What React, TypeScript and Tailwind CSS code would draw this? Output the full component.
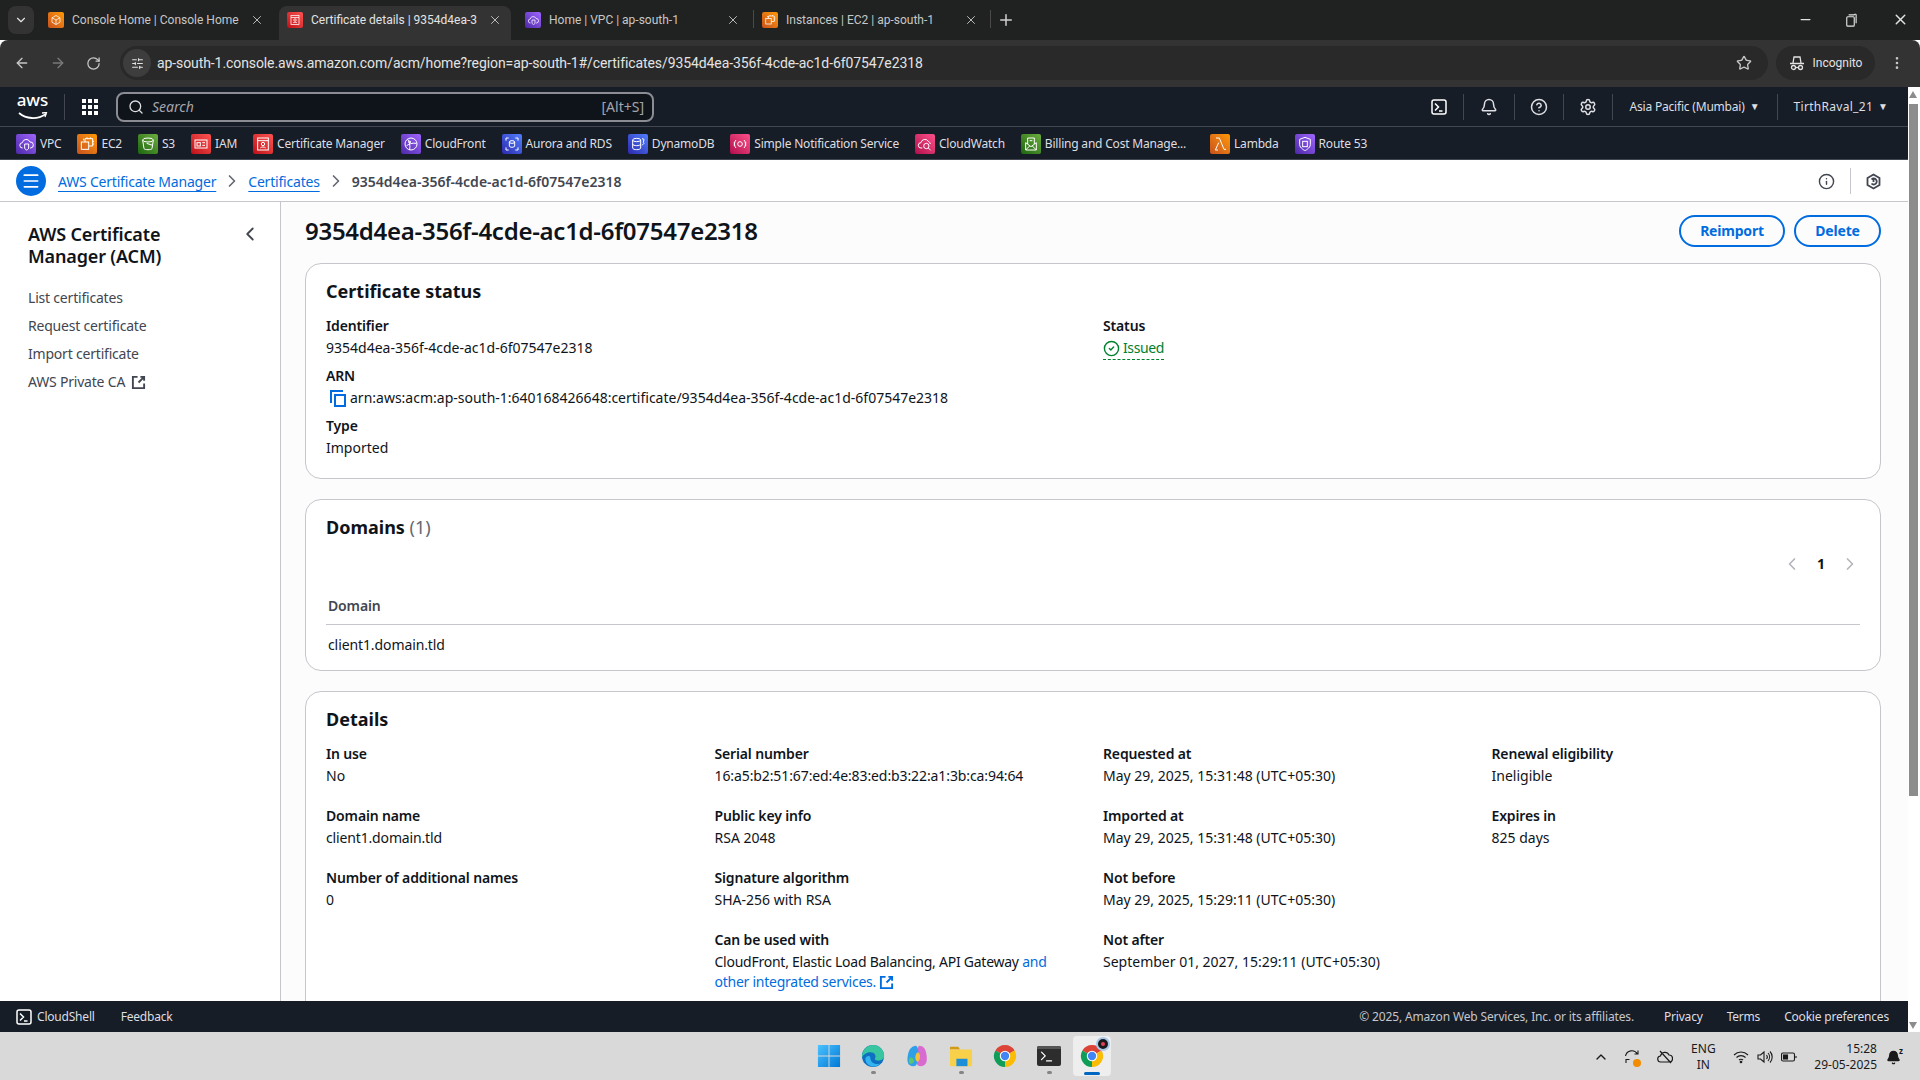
import React from "react";
import { X, ArrowLeft, ArrowRight, RotateCw, Star, EllipsisVertical, ChevronDown, Plus, Minus, Search, Bell, CircleHelp, Settings, ChevronRight, ChevronLeft, Info, Menu, CircleCheck, ChevronUp, SlidersHorizontal, Terminal } from "lucide-react";

const SANS = "font-['Noto_Sans',sans-serif]";
const UI = "font-['Roboto',sans-serif]";

const GRAD: Record<string, string> = {
  purple: "bg-linear-to-tr from-[#4d27a8] to-[#a166ff]",
  orange: "bg-linear-to-tr from-[#c8511b] to-[#ff9900]",
  green: "bg-linear-to-tr from-[#1b660f] to-[#6cae3e]",
  red: "bg-linear-to-tr from-[#bd0816] to-[#ff5252]",
  blue: "bg-linear-to-tr from-[#2e27ad] to-[#527fff]",
  pink: "bg-linear-to-tr from-[#b0084d] to-[#ff4f8b]",
};

const GLYPH: Record<string, React.ReactNode> = {
  vpc: <><path d="M7 18a4 4 0 0 1-.5-8 6 6 0 0 1 11.500-1 4.500 4.500 0 0 1 1 9h-1" /><path d="M10 12h6v6c0 2-3 3-3 3s-3-1-3-3z" /></>,
  ec2: <><rect x="3.500" y="9" width="11" height="11" /><path d="M9 9V4h11.500v11H15" /><path d="M7 6.500V4M12 2v2M17 2v2M22.500 8H20M22.500 12H20" /></>,
  s3: <><ellipse cx="12" cy="6" rx="8" ry="3" /><path d="M4 6l2 13c1 2 11 2 12 0l2-13" /><path d="M10 11l9 3" /></>,
  iam: <><rect x="3" y="6" width="18" height="12" /><rect x="6" y="10" width="5" height="5" /><path d="M14 10h4M14 14h4" /></>,
  acm: <><rect x="4" y="3" width="16" height="18" /><path d="M4 7h16" /><circle cx="12" cy="12" r="2.500" /><path d="M8 18c1-2 7-2 8 0" /></>,
  cf: <><circle cx="12" cy="12" r="9" /><path d="M7 5c3 4 4 9 3 16M5 15c3-3 9-5 15-4" /><circle cx="10" cy="9" r="1.500" /></>,
  rds: <><path d="M3 7V3h4M17 3h4v4M21 17v4h-4M7 21H3v-4" /><ellipse cx="12" cy="9" rx="4" ry="2" /><path d="M8 9v6c0 2.600 8 2.600 8 0V9" /></>,
  ddb: <><ellipse cx="10" cy="6" rx="6" ry="2.500" /><path d="M4 6v12c0 3.300 12 3.300 12 0V6M4 12c0 3.300 12 3.300 12 0" /><path d="M18 4l3 1-1 5 1 1-3 3" /></>,
  sns: <><circle cx="12" cy="12" r="3.500" /><path d="M6 6a9 9 0 0 0 0 12M18 6a9 9 0 0 1 0 12M3.500 9v6M20.500 9v6" /></>,
  cw: <><path d="M8 18H6a4 4 0 0 1 0-8 6 6 0 0 1 11-2 5 5 0 0 1 3 4" /><circle cx="14" cy="15" r="4" /><path d="M17 18l3.500 3.500" /></>,
  bill: <><path d="M4 10l8 6 8-6v11H4z" /><path d="M4 21l6-6M20 21l-6-6" /><path d="M7 12V3h10v9M10 7h4" /></>,
  lambda: <path d="M6 3h5l7 17h3M9 21h-4l5-11" />,
  r53: <><path d="M12 2l8 3v8c0 5-8 9-8 9s-8-4-8-9V5z" /><rect x="8.500" y="8" width="7" height="8" /></>,
  home: <><path d="M12 3l8 4.500v9L12 21l-8-4.500v-9zM4 7.500l8 4.500 8-4.500M12 12v9" /></>,
};

const Tile = ({ c, g, s = 20 }: { c: string; g: string; s?: number }) => (
  <span className={`flex shrink-0 items-center justify-center rounded-[2px] ${GRAD[c]}`} style={{ width: s, height: s }}>
    <svg width={s - 4} height={s - 4} viewBox="0 0 24 24" fill="none" stroke="#fff" strokeWidth="1.5">{GLYPH[g]}</svg>
  </span>
);

function Tab({ title, c, g, active, sep, w, pr }: { title: string; c: string; g: string; active?: boolean; sep?: boolean; w: string; pr: string }) {
  return (
    <div className={`relative flex h-[34px] items-center pb-[6px] pl-2 ${pr} ${w} ${UI} ${active ? "rounded-t-lg bg-[#333333] text-[#e3e3e3]" : "text-[#c7c7c7]"}`}>
      <Tile c={c} g={g} s={16} />
      <span className="ml-2 flex-1 overflow-hidden whitespace-nowrap text-[12px]">{title}</span>
      <X size={14} strokeWidth={1.5} className="ml-[11px]" color="#d0d0d0" />
      {sep && <span className="absolute right-0 top-1 h-[18px] w-px bg-[#4a4a4a]" />}
    </div>
  );
}

function ServiceItem({ label, c, g, cls = "" }: { label: string; c: string; g: string; cls?: string }) {
  return (
    <div className={`flex items-center gap-[4px] ${cls}`}>
      <Tile c={c} g={g} />
      <span className="whitespace-nowrap text-[12px] tracking-[-0.2px] text-[#dedee3]">{label}</span>
    </div>
  );
}

const Field = ({ label, children }: { label: string; children: React.ReactNode }) => (
  <div className="text-[14px] leading-[22px]">
    <div className="font-semibold tracking-[-0.15px] text-[#0f141a]">{label}</div>
    <div className="text-[#0f141a]">{children}</div>
  </div>
);

const Ext = ({ size = 16 }: { size?: number }) => (
  <svg width={size} height={size} viewBox="0 0 16 16" fill="none" stroke="currentColor" strokeWidth="2" className="inline-block align-[-3px]">
    <path d="M7 2H2v12h12V9" />
    <path d="M10 2h4v4M14 2L8 8" />
  </svg>
);

const Card = ({ children, cls = "" }: { children: React.ReactNode; cls?: string }) => (
  <section className={`rounded-2xl border border-[#c6c6cd] bg-white px-5 ${cls}`}>{children}</section>
);

const Divider = () => <span className="h-[26px] w-px bg-[#424650]" />;

const Shell = () => (
  <svg width="16" height="16" viewBox="0 0 16 16" fill="none" stroke="#fff" strokeWidth="1.500">
    <rect x="1" y="1" width="14" height="14" rx="2" />
    <path d="M4 4.500L7.500 8 4 11.500M8 12h3.500" />
  </svg>
);

const Chrome = () => (
  <svg width="24" height="24" viewBox="0 0 26 26">
    <path d="M13 13L2.600 7A12 12 0 0 1 23.400 7z" fill="#db4437" />
    <path d="M13 13L2.600 7A12 12 0 0 0 13 25z" fill="#0f9d58" />
    <path d="M13 13V25A12 12 0 0 0 23.400 7z" fill="#fbbc05" />
    <circle cx="13" cy="13" r="5.700" fill="#fff" />
    <circle cx="13" cy="13" r="4.500" fill="#4285f4" />
  </svg>
);

const TaskIcon = ({ children, dot }: { children: React.ReactNode; dot?: boolean }) => (
  <span className="relative flex h-[24px] w-[24px] items-center justify-center">
    {children}
    {dot && <span className="absolute bottom-[-6px] h-[3px] w-[5px] rounded-full bg-[#858585]" />}
  </span>
);

export default function App() {
  return (
    <div className={`flex h-[1080px] w-[1920px] flex-col overflow-hidden ${SANS}`}>
      {/* tab strip */}
      <div className="flex h-[40px] shrink-0 items-end bg-[#202221] pl-2">
        <div className="mb-[6px] mr-[6px] flex h-[28px] w-[26px] items-center justify-center rounded-lg bg-[#333333]">
          <ChevronDown size={14} color="#e3e3e3" />
        </div>
        <div className="flex">
          <Tab title="Console Home | Console Home" c="orange" g="home" w="w-[239px]" pr="pr-[15px]" />
          <Tab title="Certificate details | 9354d4ea-356f-4cde" c="red" g="acm" w="w-[232px]" pr="pr-[9px]" active />
          <div className="w-[6px]" />
          <Tab title="Home | VPC | ap-south-1" c="purple" g="vpc" w="w-[237px]" pr="pr-[14px]" sep />
          <Tab title="Instances | EC2 | ap-south-1" c="orange" g="ec2" w="w-[237px]" pr="pr-[13px]" sep />
        </div>
        <Plus size={18} color="#d0d0d0" className="mb-[11px] ml-[6px]" />
        <div className="mb-[12px] ml-auto flex items-center pr-[11px] text-[#e3e3e3]">
          <Minus size={15} />
          <svg width="15" height="15" viewBox="0 0 16 16" fill="none" stroke="currentColor" strokeWidth="1.200" className="ml-[30px]">
            <rect x="4" y="5" width="8" height="10" rx="1" />
            <path d="M6 3h6a1 1 0 0 1 2 1v8" />
          </svg>
          <X size={17} className="ml-[34px]" />
        </div>
      </div>
      {/* toolbar */}
      <div className="flex h-[47px] shrink-0 items-center rounded-t-lg bg-[#333333] pb-px pl-[14px] text-[#c7c7c7]">
        <ArrowLeft size={16} />
        <ArrowRight size={16} color="#7a7a7a" className="ml-5" />
        <RotateCw size={15} className="ml-5" />
        <div className="ml-[19px] flex h-[34px] w-[1648px] items-center rounded-full bg-[#292929] pl-[3px]">
          <span className="flex h-[28px] w-[28px] items-center justify-center rounded-full bg-[#3d3d3d]">
            <SlidersHorizontal size={13} color="#e3e3e3" />
          </span>
          <span className={`ml-[6px] text-[14px] tracking-[-0.09px] text-[#e3e3e3] ${UI}`}>ap-south-1.console.aws.amazon.com/acm/home?region=ap-south-1#/certificates/9354d4ea-356f-4cde-ac1d-6f07547e2318</span>
          <Star size={16} className="ml-auto mr-[16px]" />
        </div>
        <div className={`ml-2 flex h-[34px] w-[99px] items-center justify-center gap-[8px] rounded-full bg-[#292929] text-[12px] text-[#e3e3e3] ${UI}`}>
          <svg width="16" height="16" viewBox="0 0 16 16" fill="none" stroke="#e3e3e3" strokeWidth="1.300"><path d="M1 8.500h14M4 8l1-6h6l1 6" /><circle cx="4.500" cy="12.500" r="2" /><circle cx="11.500" cy="12.500" r="2" /><path d="M6.500 12.500h3" /></svg>
          Incognito
        </div>
        <EllipsisVertical size={16} className="ml-[14px]" />
      </div>
      {/* browser viewport */}
      <div className="flex min-h-0 flex-1">
        <div className="flex min-w-0 flex-1 flex-col">
          {/* aws nav */}
          <div className="flex h-[40px] shrink-0 items-center border-b border-[#424650] bg-[#161d26] text-[#dedee3]">
            <div className="relative ml-[17px] flex h-[32px] w-[31px] flex-col items-center">
              <span className="text-[17px] font-medium leading-[18px] text-white">aws</span>
              <svg width="31" height="9" viewBox="0 0 31 9" className="absolute bottom-[2px]"><path d="M2 1c7 6 18 7 27 1" stroke="#fff" strokeWidth="1.800" fill="none" /><path d="M25 1l4.500-.5L28 5" fill="none" stroke="#fff" strokeWidth="1.300" /></svg>
            </div>
            <span className="ml-[16px] h-[26px] w-px bg-[#424650]" />
            <svg width="18" height="18" viewBox="0 0 18 18" fill="#fff" className="ml-[16px]">
              <path d="M1 1h4v4H1zM7 1h4v4H7zM13 1h4v4h-4zM1 7h4v4H1zM7 7h4v4H7zM13 7h4v4h-4zM1 13h4v4H1zM7 13h4v4H7zM13 13h4v4h-4z" />
            </svg>
            <div className="ml-[17px] flex h-[30px] w-[538px] items-center rounded-[8px] border-2 border-[#8c8c94] bg-[#0f141a] pl-[10px] pr-2">
              <Search size={16} color="#dedee3" />
              <span className="ml-[8px] text-[14px] italic text-[#a4a4ad]">Search</span>
              <span className="ml-auto text-[14px] text-[#a4a4ad]">[Alt+S]</span>
            </div>
            <div className="ml-auto flex items-center">
              <span className="mr-[16px]"><Shell /></span>
              <Divider />
              <Bell size={18} className="mx-[16px]" />
              <Divider />
              <CircleHelp size={18} className="mx-[15px]" />
              <Divider />
              <Settings size={18} className="mx-[15px]" />
              <Divider />
              <span className="ml-[17px] text-[12px] tracking-[-0.2px]">Asia Pacific (Mumbai)</span>
              <span className="ml-[5px] mr-[17px] text-[10px]">▼</span>
              <Divider />
              <span className="ml-[16px] text-[12px] tracking-[0.3px]">TirthRaval_21</span>
              <span className="ml-[5px] mr-[20px] text-[10px]">▼</span>
            </div>
          </div>
          {/* services */}
          <div className="flex h-[33px] shrink-0 items-center gap-[16px] border-b border-[#424650] bg-[#161d26] pl-[16px] pt-px">
            <ServiceItem label="VPC" c="purple" g="vpc" />
            <ServiceItem label="EC2" c="orange" g="ec2" />
            <ServiceItem label="S3" c="green" g="s3" />
            <ServiceItem label="IAM" c="red" g="iam" />
            <ServiceItem label="Certificate Manager" c="red" g="acm" />
            <ServiceItem label="CloudFront" c="purple" g="cf" />
            <ServiceItem label="Aurora and RDS" c="blue" g="rds" />
            <ServiceItem label="DynamoDB" c="blue" g="ddb" />
            <ServiceItem label="Simple Notification Service" c="pink" g="sns" />
            <ServiceItem label="CloudWatch" c="pink" g="cw" />
            <ServiceItem label="Billing and Cost Manage..." c="green" g="bill" cls="mr-[8px]" />
            <ServiceItem label="Lambda" c="orange" g="lambda" />
            <ServiceItem label="Route 53" c="purple" g="r53" />
          </div>
          {/* breadcrumbs */}
          <div className="flex h-[42px] shrink-0 items-center border-b border-[#c6c6cd] bg-white pl-[16px] pt-px">
            <span className="flex h-[30px] w-[30px] items-center justify-center rounded-full bg-[#006ce0]">
              <Menu size={20} color="#fff" />
            </span>
            <span className="ml-3 text-[14px] tracking-[-0.2px] text-[#006ce0] underline underline-offset-4">AWS Certificate Manager</span>
            <ChevronRight size={20} color="#656871" className="mx-[6px]" />
            <span className="text-[14px] tracking-[-0.2px] text-[#006ce0] underline underline-offset-4">Certificates</span>
            <ChevronRight size={20} color="#656871" className="mx-[6px]" />
            <span className="text-[14px] font-semibold text-[#424650]">9354d4ea-356f-4cde-ac1d-6f07547e2318</span>
            <div className="ml-auto flex items-center pr-[26px] text-[#424650]">
              <Info size={17} className="mr-[15px]" />
              <span className="h-[26px] w-px bg-[#c6c6cd]" />
              <svg width="17" height="17" viewBox="0 0 17 17" fill="none" stroke="currentColor" strokeWidth="1.800" className="ml-[14px]">
                <path d="M8.500 1.500l6 3.500v7l-6 3.500-6-3.500V5z" />
                <path d="M6.500 6.500a3 3 0 1 1 0 4M8.500 6.500v2.500" />
              </svg>
            </div>
          </div>
          {/* body */}
          <div className="flex min-h-0 flex-1">
            <aside className="w-[281px] shrink-0 border-r border-[#c6c6cd] bg-white pl-[28px] pr-[24px] pt-[21px]">
              <div className="flex items-start justify-between">
                <h2 className="w-[170px] text-[18px] font-semibold leading-[22px] tracking-[-0.15px] text-[#0f141a]">AWS Certificate Manager (ACM)</h2>
                <ChevronLeft size={22} color="#424650" className="mr-[-5px] mt-[0px]" />
              </div>
              <nav className="mt-[20px] flex flex-col gap-[6px] text-[14px] leading-[22px] tracking-[-0.2px] text-[#424650]">
                <span>List certificates</span>
                <span>Request certificate</span>
                <span>Import certificate</span>
                <span>AWS Private CA <span className="ml-[2px]"><Ext size={15} /></span></span>
              </nav>
            </aside>
            <main className="min-w-0 flex-1 overflow-hidden bg-[#fcfcfc] pl-6 pr-[27px]">
              <div className="flex h-[61px] items-center justify-between pb-[4px]">
                <h1 className="text-[24px] font-semibold tracking-[-0.27px] text-[#0f141a]">9354d4ea-356f-4cde-ac1d-6f07547e2318</h1>
                <div className="flex gap-[9px]">
                  <button className="h-[32px] w-[106px] rounded-full border-2 border-[#006ce0] text-[14px] font-bold tracking-[-0.2px] text-[#006ce0]">Reimport</button>
                  <button className="h-[32px] w-[87px] rounded-full border-2 border-[#006ce0] text-[14px] font-bold tracking-[-0.2px] text-[#006ce0]">Delete</button>
                </div>
              </div>
              <Card cls="h-[216px] pt-[14px]">
                <h2 className="text-[18px] font-bold leading-[26px] text-[#0f141a]">Certificate status</h2>
                <div className="mt-[11px] grid grid-cols-[777px_1fr]">
                  <div className="flex flex-col gap-[6px]">
                    <Field label="Identifier">9354d4ea-356f-4cde-ac1d-6f07547e2318</Field>
                    <Field label="ARN">
                      <span className="flex items-center">
                        <svg width="18" height="18" viewBox="0 0 18 18" fill="none" stroke="#006ce0" strokeWidth="2" className="ml-[3px] mr-[3px]">
                          <path d="M2 14V2h12" />
                          <rect x="6" y="6" width="10" height="11" />
                        </svg>
                        arn:aws:acm:ap-south-1:640168426648:certificate/9354d4ea-356f-4cde-ac1d-6f07547e2318
                      </span>
                    </Field>
                    <Field label="Type">Imported</Field>
                  </div>
                  <Field label="Status">
                    <span className="inline-flex items-center gap-[3px] border-b border-dashed border-[#00802f] tracking-[-0.4px] text-[#00802f]">
                      <CircleCheck size={17} strokeWidth={2} />
                      Issued
                    </span>
                  </Field>
                </div>
              </Card>
              <Card cls="mt-5 h-[172px] pt-[14px]">
                <h2 className="text-[18px] font-bold leading-[26px] text-[#0f141a]">Domains <span className="font-normal text-[#656871]">(1)</span></h2>
                <div className="mt-[13px] flex items-center justify-end gap-[12px] text-[#b4b4bb]">
                  <ChevronLeft size={20} />
                  <span className="w-[14px] text-center text-[14px] font-bold text-[#0f141a]">1</span>
                  <ChevronRight size={20} />
                </div>
                <div className="mt-[21px] border-b border-[#c6c6cd] pb-[7px] pl-[2px] text-[14px] font-semibold leading-[22px] tracking-[-0.15px] text-[#424650]">Domain</div>
                <div className="pl-[2px] pt-[9px] text-[14px] leading-[22px] tracking-[-0.1px] text-[#0f141a]">client1.domain.tld</div>
              </Card>
              <Card cls="mt-5 h-[400px] pt-[14px]">
                <h2 className="text-[18px] font-bold leading-[26px] text-[#0f141a]">Details</h2>
                <div className="mt-[11px] grid grid-cols-4 gap-x-5">
                  <div className="flex flex-col gap-[18px]">
                    <Field label="In use">No</Field>
                    <Field label="Domain name"><span className="tracking-[-0.15px]">client1.domain.tld</span></Field>
                    <Field label="Number of additional names">0</Field>
                  </div>
                  <div className="flex flex-col gap-[18px]">
                    <Field label="Serial number"><span className="tracking-[-0.1px]">16:a5:b2:51:67:ed:4e:83:ed:b3:22:a1:3b:ca:94:64</span></Field>
                    <Field label="Public key info">RSA 2048</Field>
                    <Field label="Signature algorithm">SHA-256 with RSA</Field>
                    <Field label="Can be used with">
                      <span className="mt-[1px] block w-[350px] leading-[20px] tracking-[-0.25px]">CloudFront, Elastic Load Balancing, API Gateway <span className="text-[#006ce0]">and other integrated services. <Ext size={15} /></span></span>
                    </Field>
                  </div>
                  <div className="flex flex-col gap-[18px]">
                    <Field label="Requested at">May 29, 2025, 15:31:48 (UTC+05:30)</Field>
                    <Field label="Imported at">May 29, 2025, 15:31:48 (UTC+05:30)</Field>
                    <Field label="Not before">May 29, 2025, 15:29:11 (UTC+05:30)</Field>
                    <Field label="Not after">September 01, 2027, 15:29:11 (UTC+05:30)</Field>
                  </div>
                  <div className="flex flex-col gap-[18px]">
                    <Field label="Renewal eligibility">Ineligible</Field>
                    <Field label="Expires in">825 days</Field>
                  </div>
                </div>
              </Card>
            </main>
          </div>
          {/* footer */}
          <div className="flex h-[31px] shrink-0 items-center bg-[#161d26] pl-[16px] pr-[19px] text-[12px] tracking-[-0.2px] text-[#dedee3]">
            <Shell />
            <span className="ml-[5px]">CloudShell</span>
            <span className="ml-[26px]">Feedback</span>
            <span className="ml-auto tracking-[-0.15px] text-[#c6c6cd]">© 2025, Amazon Web Services, Inc. or its affiliates.</span>
            <span className="ml-[30px]">Privacy</span>
            <span className="ml-[24px]">Terms</span>
            <span className="ml-[24px]">Cookie preferences</span>
          </div>
        </div>
        {/* scrollbar */}
        <div className="flex w-[12px] shrink-0 flex-col items-start bg-white pl-[1px]">
          <span className="mt-[4px] h-0 w-0 border-x-[4px] border-b-[7px] border-x-transparent border-b-[#8c8c8c]" />
          <span className="mt-[6px] h-[692px] w-[9px] bg-[#8c8c8c]" />
          <span className="mb-[3px] mt-auto h-0 w-0 border-x-[4px] border-t-[7px] border-x-transparent border-t-[#8c8c8c]" />
        </div>
      </div>
      {/* taskbar */}
      <div className="flex h-[48px] shrink-0 items-center bg-[#d9d9d9] text-[#1a1a1a]">
        <div className="ml-[817px] flex items-center gap-[20px]">
          <TaskIcon>
            <svg width="24" height="24" viewBox="0 0 26 26">
              <defs><linearGradient id="w" x1="0" y1="0" x2="1" y2="1"><stop offset="0" stopColor="#4cc2ff" /><stop offset="1" stopColor="#0078d4" /></linearGradient></defs>
              <path d="M1 1h11.500v11.500H1zM13.500 1H25v11.500H13.500zM1 13.500h11.500V25H1zM13.500 13.500H25V25H13.500z" fill="url(#w)" />
            </svg>
          </TaskIcon>
          <TaskIcon dot>
            <svg width="24" height="24" viewBox="0 0 26 26">
              <circle cx="13" cy="13" r="12" fill="#0f6fc0" />
              <path d="M13 1a12 12 0 0 1 12 12c0 3-3 5-6 5-3 0-4-1-4-2 2-3 0-7-5-7C6 9 2 12 1 15 1 7 6 1 13 1z" fill="#38c6a0" />
              <path d="M10 14c0 6 5 9 11 7-3 3-7 4-10 3-4-1-7-5-6-9 1-2 4-3 5-1z" fill="#33b4f0" />
            </svg>
          </TaskIcon>
          <TaskIcon>
            <svg width="24" height="24" viewBox="0 0 26 26">
              <path d="M15 2c5 0 7 3 8 8s2 14-6 14c-4 0-5-3-3-7s1-7-2-8z" fill="#d86ad0" />
              <path d="M11 2C6 3 4 7 3 13s0 11 6 11c4 0 4-3 5-8s1-14-3-14z" fill="#2f9fe8" />
              <path d="M14 9c-3 1-4 8-1 10s5-9 1-10z" fill="#f2c13a" />
              <path d="M5 15c2-1 4 0 5 3-1 4-5 5-6 1z" fill="#5ac66f" />
            </svg>
          </TaskIcon>
          <TaskIcon dot>
            <svg width="24" height="24" viewBox="0 0 26 26">
              <path d="M1 4a1 1 0 0 1 1-1h8l2 3H1z" fill="#d59a13" />
              <rect x="1" y="6" width="24" height="18" rx="1" fill="#f8d04a" />
              <rect x="8" y="16" width="12" height="8" fill="#1c8fd8" />
            </svg>
          </TaskIcon>
          <TaskIcon><Chrome /></TaskIcon>
          <TaskIcon dot>
            <span className="flex h-[20px] w-[24px] flex-col overflow-hidden rounded-[2px] bg-[#2d2d2d]">
              <span className="h-[3px] bg-[#555555]" />
              <Terminal size={15} color="#fff" className="ml-[2px]" />
            </span>
          </TaskIcon>
          <span className="relative -ml-[8px] flex h-[40px] w-[38px] items-center justify-center rounded-[4px] bg-[#eeeeee]">
            <Chrome />
            <span className="absolute right-[1px] top-[1px] flex h-[14px] w-[14px] items-center justify-center rounded-full border-2 border-[#a8c8ea] bg-[#1a1a1a]">
              <span className="h-[4px] w-[4px] rounded-full bg-[#e0405a]" />
            </span>
            <span className="absolute bottom-[1px] h-[3px] w-[16px] rounded bg-[#0067c0]" />
          </span>
        </div>
        <div className="ml-auto flex items-center pr-[19px] pt-[2px] text-[12px]">
          <ChevronUp size={16} />
          <span className="relative ml-[15px]">
            <svg width="16" height="16" viewBox="0 0 16 16" fill="none" stroke="#1a1a1a" strokeWidth="1.100">
              <path d="M1.500 7a6.500 6.500 0 0 1 12-2M14 1.500V5h-3.500M2 14v-3.500h3.500" />
            </svg>
            <span className="absolute bottom-[-2px] right-[-1px] h-[8px] w-[8px] rounded-full bg-[#f28c00]" />
          </span>
          <svg width="16" height="16" viewBox="0 0 16 16" fill="none" stroke="#1a1a1a" strokeWidth="1.200" className="ml-[17px]">
            <path d="M4 13a3 3 0 0 1-.5-6A4.500 4.500 0 0 1 12 6a3.500 3.500 0 0 1 0 7zM3 2l11 12" />
          </svg>
          <span className="ml-[14px] w-[32px] text-center leading-[16px]">ENG<br />IN</span>
          <svg width="16" height="16" viewBox="0 0 16 16" fill="none" stroke="#1a1a1a" strokeWidth="1.100" className="ml-[14px]">
            <path d="M1 6c4-4 10-4 14 0M3.500 8.500c2.500-2.500 6.500-2.500 9 0M6 11c1-1 3-1 4 0" />
            <circle cx="8" cy="13" r="0.800" fill="#1a1a1a" />
          </svg>
          <svg width="16" height="16" viewBox="0 0 16 16" fill="none" stroke="#1a1a1a" strokeWidth="1.100" className="ml-[8px]">
            <path d="M1 6h2.500L7 3v10l-3.500-3H1zM9.500 6a3 3 0 0 1 0 4M11 4a6 6 0 0 1 0 8M13 2.500a8 8 0 0 1 0 11" />
          </svg>
          <svg width="16" height="16" viewBox="0 0 16 16" fill="none" stroke="#1a1a1a" strokeWidth="1.100" className="ml-[8px]">
            <rect x="0.500" y="4" width="13" height="8" rx="1.500" />
            <rect x="2.500" y="6" width="4" height="4" fill="#1a1a1a" />
            <path d="M15 7v2" />
          </svg>
          <span className="ml-[17px] text-right leading-[16px]">15:28<br />29-05-2025</span>
          <span className="relative ml-[8px] flex h-[16px] w-[16px] items-center justify-center">
            <Bell size={15} fill="#1a1a1a" />
            <span className="absolute right-[-2px] top-[-4px] text-[8px] font-bold">z</span>
          </span>
        </div>
      </div>
    </div>
  );
}
